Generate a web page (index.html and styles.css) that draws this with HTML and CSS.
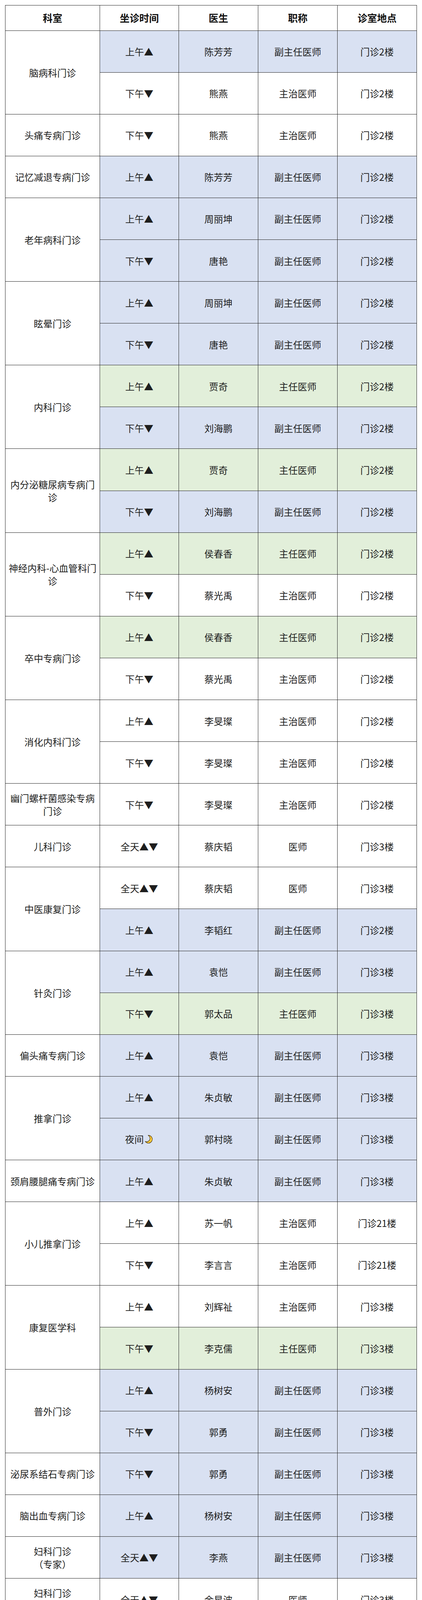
FILE: index.html
```html
<!DOCTYPE html>
<html lang="zh-CN">
<head>
<meta charset="utf-8">
<title>门诊坐诊时间表</title>
<link rel="stylesheet" href="styles.css">
</head>
<body>
<div class="schedule" role="table">
  <div class="cell head" role="columnheader">科室</div>
  <div class="cell head" role="columnheader">坐诊时间</div>
  <div class="cell head" role="columnheader">医生</div>
  <div class="cell head" role="columnheader">职称</div>
  <div class="cell head" role="columnheader">诊室地点</div>

  <div class="cell dept span2">脑病科门诊</div>
  <div class="cell b">上午▲</div><div class="cell b">陈芳芳</div><div class="cell b">副主任医师</div><div class="cell b">门诊2楼</div>
  <div class="cell">下午▼</div><div class="cell">熊燕</div><div class="cell">主治医师</div><div class="cell">门诊2楼</div>

  <div class="cell dept">头痛专病门诊</div>
  <div class="cell">下午▼</div><div class="cell">熊燕</div><div class="cell">主治医师</div><div class="cell">门诊2楼</div>

  <div class="cell dept">记忆减退专病门诊</div>
  <div class="cell b">上午▲</div><div class="cell b">陈芳芳</div><div class="cell b">副主任医师</div><div class="cell b">门诊2楼</div>

  <div class="cell dept span2">老年病科门诊</div>
  <div class="cell b">上午▲</div><div class="cell b">周丽坤</div><div class="cell b">副主任医师</div><div class="cell b">门诊2楼</div>
  <div class="cell b">下午▼</div><div class="cell b">唐艳</div><div class="cell b">副主任医师</div><div class="cell b">门诊2楼</div>

  <div class="cell dept span2">眩晕门诊</div>
  <div class="cell b">上午▲</div><div class="cell b">周丽坤</div><div class="cell b">副主任医师</div><div class="cell b">门诊2楼</div>
  <div class="cell b">下午▼</div><div class="cell b">唐艳</div><div class="cell b">副主任医师</div><div class="cell b">门诊2楼</div>

  <div class="cell dept span2">内科门诊</div>
  <div class="cell g">上午▲</div><div class="cell g">贾奇</div><div class="cell g">主任医师</div><div class="cell g">门诊2楼</div>
  <div class="cell b">下午▼</div><div class="cell b">刘海鹏</div><div class="cell b">副主任医师</div><div class="cell b">门诊2楼</div>

  <div class="cell dept span2">内分泌糖尿病专病门诊</div>
  <div class="cell g">上午▲</div><div class="cell g">贾奇</div><div class="cell g">主任医师</div><div class="cell g">门诊2楼</div>
  <div class="cell b">下午▼</div><div class="cell b">刘海鹏</div><div class="cell b">副主任医师</div><div class="cell b">门诊2楼</div>

  <div class="cell dept span2">神经内科-心血管科门诊</div>
  <div class="cell g">上午▲</div><div class="cell g">侯春香</div><div class="cell g">主任医师</div><div class="cell g">门诊2楼</div>
  <div class="cell">下午▼</div><div class="cell">蔡光禹</div><div class="cell">主治医师</div><div class="cell">门诊2楼</div>

  <div class="cell dept span2">卒中专病门诊</div>
  <div class="cell g">上午▲</div><div class="cell g">侯春香</div><div class="cell g">主任医师</div><div class="cell g">门诊2楼</div>
  <div class="cell">下午▼</div><div class="cell">蔡光禹</div><div class="cell">主治医师</div><div class="cell">门诊2楼</div>

  <div class="cell dept span2">消化内科门诊</div>
  <div class="cell">上午▲</div><div class="cell">李旻璨</div><div class="cell">主治医师</div><div class="cell">门诊2楼</div>
  <div class="cell">下午▼</div><div class="cell">李旻璨</div><div class="cell">主治医师</div><div class="cell">门诊2楼</div>

  <div class="cell dept">幽门螺杆菌感染专病门诊</div>
  <div class="cell">下午▼</div><div class="cell">李旻璨</div><div class="cell">主治医师</div><div class="cell">门诊2楼</div>

  <div class="cell dept">儿科门诊</div>
  <div class="cell">全天▲▼</div><div class="cell">蔡庆韬</div><div class="cell">医师</div><div class="cell">门诊3楼</div>

  <div class="cell dept span2">中医康复门诊</div>
  <div class="cell">全天▲▼</div><div class="cell">蔡庆韬</div><div class="cell">医师</div><div class="cell">门诊3楼</div>
  <div class="cell b">上午▲</div><div class="cell b">李韬红</div><div class="cell b">副主任医师</div><div class="cell b">门诊2楼</div>

  <div class="cell dept span2">针灸门诊</div>
  <div class="cell b">上午▲</div><div class="cell b">袁恺</div><div class="cell b">副主任医师</div><div class="cell b">门诊3楼</div>
  <div class="cell g">下午▼</div><div class="cell g">郭太品</div><div class="cell g">主任医师</div><div class="cell g">门诊3楼</div>

  <div class="cell dept">偏头痛专病门诊</div>
  <div class="cell b">上午▲</div><div class="cell b">袁恺</div><div class="cell b">副主任医师</div><div class="cell b">门诊3楼</div>

  <div class="cell dept span2">推拿门诊</div>
  <div class="cell b">上午▲</div><div class="cell b">朱贞敏</div><div class="cell b">副主任医师</div><div class="cell b">门诊3楼</div>
  <div class="cell b">夜间<svg class="moon" viewBox="0 0 24 24" aria-label="🌙"><path d="M10 2.5A10 10 0 1 1 2.5 18A8.5 8.5 0 0 0 10 2.5Z"/></svg></div><div class="cell b">郭村晓</div><div class="cell b">副主任医师</div><div class="cell b">门诊3楼</div>

  <div class="cell dept">颈肩腰腿痛专病门诊</div>
  <div class="cell b">上午▲</div><div class="cell b">朱贞敏</div><div class="cell b">副主任医师</div><div class="cell b">门诊3楼</div>

  <div class="cell dept span2">小儿推拿门诊</div>
  <div class="cell">上午▲</div><div class="cell">苏一帆</div><div class="cell">主治医师</div><div class="cell">门诊21楼</div>
  <div class="cell">下午▼</div><div class="cell">李言言</div><div class="cell">主治医师</div><div class="cell">门诊21楼</div>

  <div class="cell dept span2">康复医学科</div>
  <div class="cell">上午▲</div><div class="cell">刘辉祉</div><div class="cell">主治医师</div><div class="cell">门诊3楼</div>
  <div class="cell g">下午▼</div><div class="cell g">李克儒</div><div class="cell g">主任医师</div><div class="cell g">门诊3楼</div>

  <div class="cell dept span2">普外门诊</div>
  <div class="cell b">上午▲</div><div class="cell b">杨树安</div><div class="cell b">副主任医师</div><div class="cell b">门诊3楼</div>
  <div class="cell b">下午▼</div><div class="cell b">郭勇</div><div class="cell b">副主任医师</div><div class="cell b">门诊3楼</div>

  <div class="cell dept">泌尿系结石专病门诊</div>
  <div class="cell b">下午▼</div><div class="cell b">郭勇</div><div class="cell b">副主任医师</div><div class="cell b">门诊3楼</div>

  <div class="cell dept">脑出血专病门诊</div>
  <div class="cell b">上午▲</div><div class="cell b">杨树安</div><div class="cell b">副主任医师</div><div class="cell b">门诊3楼</div>

  <div class="cell dept">妇科门诊<br>（专家）</div>
  <div class="cell b">全天▲▼</div><div class="cell b">李燕</div><div class="cell b">副主任医师</div><div class="cell b">门诊3楼</div>

  <div class="cell dept">妇科门诊<br>（普通）</div>
  <div class="cell">全天▲▼</div><div class="cell">余星波</div><div class="cell">医师</div><div class="cell">门诊3楼</div>

  <div class="cell dept">产科门诊<br>（专家）</div>
  <div class="cell b">全天▲▼</div><div class="cell b">李燕</div><div class="cell b">副主任医师</div><div class="cell b">门诊3楼</div>

  <div class="cell dept">产科门诊<br>（普通）</div>
  <div class="cell">全天▲▼</div><div class="cell">余星波</div><div class="cell">医师</div><div class="cell">门诊3楼</div>

  <div class="cell dept">中医妇科门诊</div>
  <div class="cell">全天▲▼</div><div class="cell">余星波</div><div class="cell">医师</div><div class="cell">门诊3楼</div>

  <div class="cell dept">产后康复专病门诊</div>
  <div class="cell b">全天▲▼</div><div class="cell b">李燕</div><div class="cell b">副主任医师</div><div class="cell b">门诊3楼</div>

  <div class="cell dept">更年期门诊</div>
  <div class="cell b">全天▲▼</div><div class="cell b">李燕</div><div class="cell b">副主任医师</div><div class="cell b">门诊3楼</div>

  <div class="cell dept">耳鼻喉科</div>
  <div class="cell">下午▼</div><div class="cell">李璐璐</div><div class="cell">主治医师</div><div class="cell">门诊3楼</div>

  <div class="cell dept">眼科</div>
  <div class="cell">下午▼</div><div class="cell">杨静晖</div><div class="cell">主治医师</div><div class="cell">门诊3楼</div>

  <div class="cell dept span2">皮肤科</div>
  <div class="cell">全天▲▼</div><div class="cell">杨榆婷</div><div class="cell">主治医师</div><div class="cell">门诊3楼</div>
  <div class="cell">下午▼夜间<svg class="moon" viewBox="0 0 24 24" aria-label="🌙"><path d="M10 2.5A10 10 0 1 1 2.5 18A8.5 8.5 0 0 0 10 2.5Z"/></svg></div><div class="cell">凡福青</div><div class="cell">医师</div><div class="cell">门诊3楼</div>

  <div class="cell dept span3">口腔科门诊</div>
  <div class="cell g">上午▲</div><div class="cell g">罗启德</div><div class="cell g">主任医师</div><div class="cell g">门诊4楼</div>
  <div class="cell">上午▲</div><div class="cell">浦丽仁</div><div class="cell">主治医师</div><div class="cell">门诊4楼</div>
  <div class="cell">下午▼</div><div class="cell">魏欣</div><div class="cell">医师</div><div class="cell">门诊4楼</div>

  <div class="cell dept span2">骨伤科·疼痛科</div>
  <div class="cell b">上午▲</div><div class="cell b">李军</div><div class="cell b">副主任医师</div><div class="cell b">门诊3楼</div>
  <div class="cell g">下午▼</div><div class="cell g">姚本礼</div><div class="cell g">主任医师</div><div class="cell g">门诊3楼</div>

  <div class="cell dept">骨质疏松专病门诊</div>
  <div class="cell b">上午▲</div><div class="cell b">李军</div><div class="cell b">副主任医师</div><div class="cell b">门诊3楼</div>

  <div class="cell dept">脑血管病MDT门诊</div>
  <div class="cell b">下午▼</div><div class="cell b">刘嘉瑞<br>（团队）</div><div class="cell b">副主任医师</div><div class="cell b">19楼VIP诊室</div>

  <div class="cell dept">疼痛MDT门诊</div>
  <div class="cell b">上午▲</div><div class="cell b">李军<br>（团队）</div><div class="cell b">副主任医师</div><div class="cell b">19楼VIP诊室</div>
</div>
</body>
</html>
```

FILE: styles.css
```css
html, body {
  margin: 0;
  padding: 0;
  background: #ffffff;
}

body {
  font-family: "Noto Sans CJK SC", "Noto Sans", sans-serif;
  color: #1e1e1e;
  padding: 13px 13px 0;
}

.schedule {
  display: grid;
  grid-template-columns: 242px 202px 203px 203px 203px;
  grid-template-rows: 64.5px;
  grid-auto-rows: 107.1px;
  width: 1054px;
  box-sizing: border-box;
  border-top: 1px solid #262626;
  border-left: 1px solid #262626;
}

.cell {
  display: flex;
  align-items: center;
  justify-content: center;
  box-sizing: border-box;
  padding: 0 6px;
  border-right: 1px solid #262626;
  border-bottom: 1px solid #262626;
  background: #ffffff;
  font-size: 24px;
  line-height: 33px;
  text-align: center;
  overflow: hidden;
}

.head {
  font-size: 25px;
  font-weight: 700;
  color: #111111;
}

.dept {
  background: #ffffff;
}

.span2 {
  grid-row: span 2;
}

.span3 {
  grid-row: span 3;
}

.b {
  background: #d9e1f2;
}

.g {
  background: #e2efda;
}

.moon {
  width: 24px;
  height: 24px;
  margin-left: 1px;
  flex: none;
}

.moon path {
  fill: #ffcb3d;
  stroke: #3b2c08;
  stroke-width: 1.2;
  stroke-linejoin: round;
}
```
